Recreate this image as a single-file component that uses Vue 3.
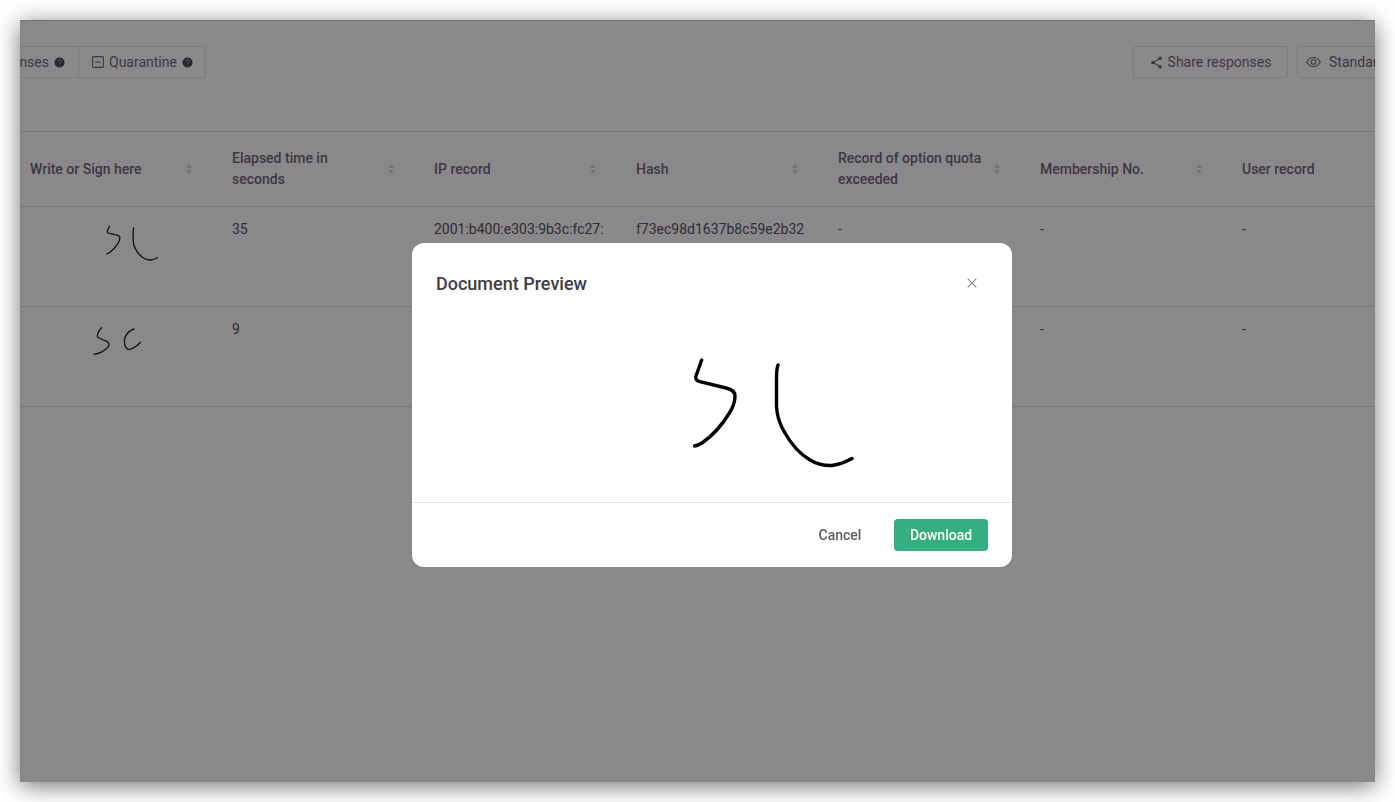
<script setup>
// strokes of the two signatures; modal one is in page pixels
const sigA = [
  'M701.7 360 L696 376 Q694.5 380 700 381.7 L726 388 Q735 390 735 396 Q735 404 730 412 Q718 432 702 443 Q698 445.5 694.5 446',
  'M778 365 Q776.5 368 776.5 380 L776.5 406 Q777 420 785 433 Q795 451 810 460 Q820 466 832 465.5 Q842 464 852 458.5'
]
const sigB = [
  'M245 368 Q232 380 232 396 Q246 404 262 410 Q272 418 262 428 Q245 444 222 448',
  'M342 372 Q322 378 314 400 Q310 425 325 434 Q342 432 362 412'
]

const columns = [
  { label: 'Write or Sign here', sort: true },
  { label: 'Elapsed time in seconds', sort: true },
  { label: 'IP record', sort: true },
  { label: 'Hash', sort: true },
  { label: 'Record of option quota exceeded', sort: true },
  { label: 'Membership No.', sort: true },
  { label: 'User record', sort: false }
]

const rows = [
  {
    view: '454 328 569 250',
    strokes: sigA,
    width: 4.2,
    cells: ['35', '2001:b400:e303:9b3c:fc27:', 'f73ec98d1637b8c59e2b32', '-', '-', '-']
  },
  {
    view: '30 333 546 240',
    strokes: sigB,
    width: 4,
    cells: ['9', '', '', '', '-', '-']
  }
]
</script>

<template>
  <div class="page">
    <div class="window">
      <div class="toolbar">
        <div class="btn-group">
          <button class="tool-btn clipped">
            Responses
            <svg class="help" viewBox="0 0 12 12"><circle cx="6" cy="6" r="5.5" fill="#3a393c" /><path d="M4.3 4.7a1.8 1.7 0 1 1 2.7 1.5c-.7.4-1 .7-1 1.3" fill="none" stroke="#8b898c" stroke-width="1.2" /><circle cx="6" cy="9.2" r=".8" fill="#8b898c" /></svg>
          </button>
          <button class="tool-btn quarantine">
            <svg class="icon" viewBox="0 0 12 12"><rect x=".6" y=".6" width="10.8" height="10.8" rx="1.2" fill="none" stroke="currentColor" stroke-width="1.1" /><path d="M3.2 6h5.6" stroke="currentColor" stroke-width="1.1" /></svg>
            Quarantine
            <svg class="help" viewBox="0 0 12 12"><circle cx="6" cy="6" r="5.5" fill="#3a393c" /><path d="M4.3 4.7a1.8 1.7 0 1 1 2.7 1.5c-.7.4-1 .7-1 1.3" fill="none" stroke="#8b898c" stroke-width="1.2" /><circle cx="6" cy="9.2" r=".8" fill="#8b898c" /></svg>
          </button>
        </div>
        <div class="toolbar-right">
          <button class="tool-btn share">
            <svg class="icon share-icon" viewBox="0 0 14 14"><path d="M10.8 2.6 3.2 7l7.6 4.4" fill="none" stroke="currentColor" stroke-width="1.2" /><circle cx="10.9" cy="2.5" r="1.9" fill="currentColor" /><circle cx="3" cy="7" r="1.9" fill="currentColor" /><circle cx="10.9" cy="11.5" r="1.9" fill="currentColor" /></svg>
            Share responses
          </button>
          <button class="tool-btn standard">
            <svg class="icon eye-icon" viewBox="0 0 16 12"><path d="M.8 6C2.5 2.8 5 1.2 8 1.2s5.5 1.6 7.2 4.8C13.5 9.2 11 10.8 8 10.8S2.5 9.2.8 6Z" fill="none" stroke="currentColor" stroke-width="1.1" /><circle cx="8" cy="6" r="2.5" fill="none" stroke="currentColor" stroke-width="1.1" /></svg>
            Standard
          </button>
        </div>
      </div>

      <div class="table">
        <div class="row head">
          <div v-for="col in columns" :key="col.label" class="cell head-cell">
            <span class="head-label">{{ col.label }}</span>
            <svg v-if="col.sort" class="sort" viewBox="0 0 8 12"><path d="M4 1 7 5H1ZM4 11 1 7h6Z" fill="#d4d4d6" /></svg>
          </div>
        </div>
        <div v-for="(row, i) in rows" :key="i" class="row body-row">
          <div class="cell">
            <svg class="thumb" :viewBox="row.view">
              <path v-for="(d, j) in row.strokes" :key="j" :d="d" fill="none" stroke="#111" :stroke-width="row.width" stroke-linecap="round" stroke-linejoin="round" />
            </svg>
          </div>
          <div v-for="(text, j) in row.cells" :key="j" class="cell">{{ text }}</div>
        </div>
      </div>

      <div class="overlay">
        <div class="modal">
          <div class="modal-head">
            <span class="modal-title">Document Preview</span>
            <svg class="close" viewBox="0 0 10 10"><path d="M.7.7l8.6 8.6M9.3.7.7 9.3" stroke="#8a888d" stroke-width="1.2" /></svg>
          </div>
          <svg class="preview" viewBox="412 312 600 190">
            <path v-for="(d, j) in sigA" :key="j" :d="d" fill="none" stroke="#000" stroke-width="3.4" stroke-linecap="round" stroke-linejoin="round" />
          </svg>
          <div class="modal-foot">
            <button class="btn-cancel">Cancel</button>
            <button class="btn-download">Download</button>
          </div>
        </div>
      </div>
    </div>
  </div>
</template>

<style>
html, body {
  margin: 0;
  background: #fff;
  overflow: hidden;
}
</style>

<style scoped>
.page {
  padding: 20px;
  font-family: Roboto, "Liberation Sans", sans-serif;
  color: #5f5d63;
}

.window {
  position: relative;
  width: 1355px;
  height: 762px;
  overflow: hidden;
  background: #fff;
  box-shadow: 0 4px 22px rgba(0, 0, 0, 0.55);
}

.toolbar {
  display: flex;
  justify-content: space-between;
  align-items: flex-start;
  height: 111px;
  box-sizing: border-box;
  padding-top: 26px;
}

.btn-group {
  display: flex;
  margin-left: -65px;
}

.toolbar-right {
  display: flex;
  gap: 9px;
  margin-right: -76px;
}

.tool-btn {
  display: flex;
  align-items: center;
  height: 32px;
  box-sizing: border-box;
  padding: 0 13px;
  border: 1px solid #e4e4e6;
  background: #fff;
  font: 400 14px Roboto, "Liberation Sans", sans-serif;
  color: #5f5d63;
  white-space: nowrap;
}

.btn-group .tool-btn + .tool-btn {
  border-left: 0;
}

.clipped {
  width: 124px;
  padding-left: 20px;
  justify-content: flex-end;
  padding-right: 13px;
}

.quarantine {
  padding-right: 12px;
}

.share {
  width: 155px;
  justify-content: center;
  border-radius: 2px;
}

.standard {
  width: 154px;
  padding-left: 8px;
  border-radius: 3px;
}

.icon {
  width: 12px;
  height: 12px;
  margin-right: 5px;
  flex: none;
}

.share-icon {
  width: 13px;
  height: 13px;
}

.eye-icon {
  width: 15px;
  height: 12px;
  margin-right: 8px;
}

.help {
  width: 11px;
  height: 11px;
  margin-left: 5px;
  flex: none;
}

.table {
  width: 1414px;
  font-size: 14px;
  line-height: 21px;
}

.row {
  display: grid;
  grid-template-columns: repeat(7, 202px);
  border-bottom: 1px solid #dededf;
}

.head {
  height: 76px;
  box-sizing: border-box;
  border-top: 1px solid #dededf;
}

.body-row {
  height: 100px;
  box-sizing: border-box;
}

.cell {
  padding: 12px 10px 0;
  min-width: 0;
  white-space: nowrap;
  color: #454448;
}

.head-cell {
  display: flex;
  align-items: center;
  padding-top: 0;
  font-weight: 500;
  color: #5f5d63;
}

.head-label {
  width: 150px;
  white-space: normal;
}

.sort {
  width: 8px;
  height: 12px;
  margin-left: 5px;
  flex: none;
}

.thumb {
  display: block;
  width: 182px;
  height: 80px;
  margin-top: -3px;
}

.overlay {
  position: absolute;
  inset: 0;
  display: flex;
  align-items: flex-start;
  box-sizing: border-box;
  padding: 223px 0 0 392px;
  background: rgba(28, 22, 30, 0.51);
  border-top: 1px solid rgba(0, 0, 0, 0.14);
  backdrop-filter: blur(0.6px);
}

.modal {
  width: 600px;
  height: 324px;
  margin-top: -1px;
  background: #fff;
  border-radius: 12px;
  display: flex;
  flex-direction: column;
}

.modal-head {
  display: flex;
  justify-content: space-between;
  align-items: center;
  height: 69px;
  box-sizing: border-box;
  padding: 11px 35px 0 24px;
}

.modal-title {
  font-size: 18px;
  font-weight: 500;
  color: #3e3d43;
}

.close {
  width: 10px;
  height: 10px;
}

.preview {
  display: block;
  width: 600px;
  height: 190px;
}

.modal-foot {
  flex: 1;
  display: flex;
  justify-content: flex-end;
  align-items: center;
  gap: 12px;
  padding: 0 24px;
  border-top: 1px solid #e9e9eb;
}

.btn-cancel,
.btn-download {
  height: 32px;
  box-sizing: border-box;
  border: 0;
  border-radius: 4px;
  font: 500 14px Roboto, "Liberation Sans", sans-serif;
}

.btn-cancel {
  width: 84px;
  background: transparent;
  color: #5f5d63;
}

.btn-download {
  width: 94px;
  background: #35ae82;
  color: #fff;
}
</style>
